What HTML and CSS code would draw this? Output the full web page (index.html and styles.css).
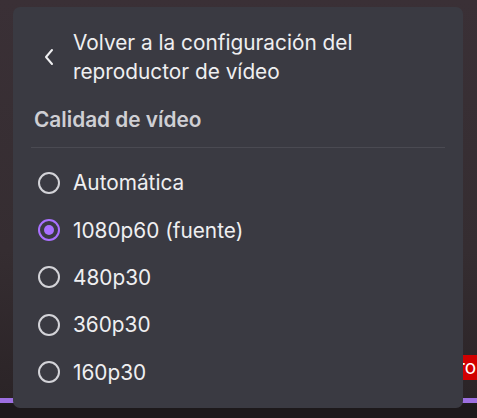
FILE: index.html
```html
<!DOCTYPE html>
<html lang="es">
<head>
<meta charset="utf-8">
<link rel="stylesheet" href="styles.css">
</head>
<body>
<div class="stage">
  <div class="player-bar"></div>
  <div class="live-badge">ro</div>
  <div class="panel">
    <button class="back">
      <svg class="chev" width="12" height="18" viewBox="0 0 12 18"><path d="M9 2 L3 9 L9 16" fill="none" stroke="#efeff1" stroke-width="2" stroke-linecap="round" stroke-linejoin="round"/></svg>
      <span class="back-text">Volver a la configuración del reproductor de vídeo</span>
    </button>
    <div class="section-title">Calidad de vídeo</div>
    <div class="sep"></div>
    <ul class="options">
      <li class="opt"><span class="radio"></span><span class="label">Automática</span></li>
      <li class="opt selected"><span class="radio"></span><span class="label">1080p60 (fuente)</span></li>
      <li class="opt"><span class="radio"></span><span class="label">480p30</span></li>
      <li class="opt"><span class="radio"></span><span class="label">360p30</span></li>
      <li class="opt"><span class="radio"></span><span class="label">160p30</span></li>
    </ul>
  </div>
</div>
</body>
</html>
```
FILE: styles.css
```css
html, body {
  margin: 0;
  padding: 0;
  width: 477px;
  height: 418px;
  overflow: hidden;
  background: #1d191b;
  font-family: Inter, "Noto Sans", sans-serif;
}
.stage {
  position: relative;
  width: 477px;
  height: 418px;
  background: linear-gradient(180deg, #3a3036 0%, #352d31 60%, #2b2427 95%, #1d191b 97%);
  padding-top: 7px;
  padding-left: 13px;
  box-sizing: border-box;
}
.player-bar {
  position: absolute;
  left: 0;
  right: 0;
  top: 398px;
  height: 5px;
  background: #9d6fe0;
}
.live-badge {
  position: absolute;
  left: 452px;
  top: 355px;
  width: 40px;
  height: 25px;
  background: #d10000;
  color: #fff;
  font-size: 19px;
  line-height: 25px;
  padding-left: 6px;
  box-sizing: border-box;
}
.panel {
  position: relative;
  width: 450px;
  height: 401px;
  background: #3a3a42;
  border-radius: 7px;
  box-sizing: border-box;
  padding: 21px 18px 0 18px;
}
.back {
  display: flex;
  align-items: center;
  gap: 18px;
  background: none;
  border: 0;
  padding: 0 0 0 12px;
  margin: 0;
  text-align: left;
  font-family: inherit;
  color: #efeff1;
  cursor: pointer;
}
.chev { flex: none; }
.back-text {
  font-size: 20.8px;
  line-height: 29px;
  width: 340px;
}
.section-title {
  margin-top: 22px;
  padding-left: 3px;
  font-size: 20.8px;
  font-weight: 600;
  color: #cfcfd4;
  line-height: 24px;
}
.sep {
  margin-top: 15px;
  height: 1px;
  background: #4a4a52;
}
.options {
  list-style: none;
  margin: 0;
  padding: 11px 0 0 0;
}
.opt {
  display: flex;
  align-items: center;
  gap: 13px;
  height: 47.4px;
  padding-left: 7px;
  color: #efeff1;
  font-size: 20.8px;
}
.radio {
  flex: none;
  width: 22px;
  height: 22px;
  border: 2.6px solid #d3d3d8;
  border-radius: 50%;
  box-sizing: border-box;
  position: relative;
}
.selected .radio {
  border-color: #a970ff;
}
.selected .radio::after {
  content: "";
  position: absolute;
  left: 50%;
  top: 50%;
  width: 10.5px;
  height: 10.5px;
  margin: -5.25px 0 0 -5.25px;
  border-radius: 50%;
  background: #a970ff;
}
```
